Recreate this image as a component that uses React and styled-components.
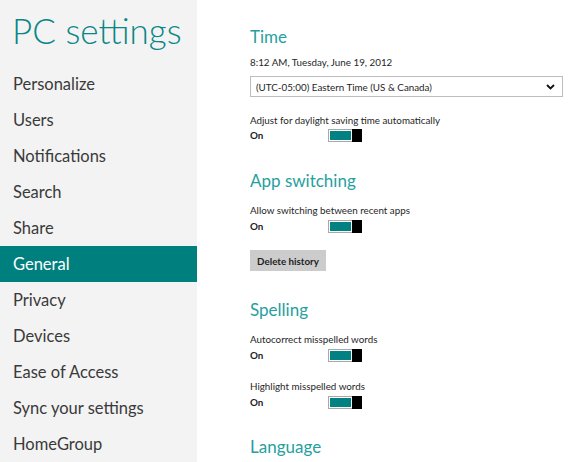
import React from "react";
import styled, { createGlobalStyle } from "styled-components";

const GlobalStyle = createGlobalStyle`
  html, body {
    margin: 0;
    padding: 0;
    background: #ffffff;
  }
  body {
    font-family: Lato, "Open Sans", sans-serif;
    color: #1e1e1e;
  }
`;

const Page = styled.div`
  display: flex;
  width: 580px;
  height: 462px;
  overflow: hidden;
`;

const Sidebar = styled.nav`
  width: 197px;
  flex-shrink: 0;
  background: #f3f3f3;
`;

const Title = styled.h1`
  margin: 0;
  height: 66px;
  padding: 10px 0 0 12px;
  box-sizing: border-box;
  font-size: 35px;
  line-height: 40px;
  font-weight: 300;
  color: #0a8686;
  white-space: nowrap;
`;

const NavList = styled.ul`
  list-style: none;
  margin: 0;
  padding: 0;
`;

const NavItem = styled.li`
  height: 36px;
  line-height: 36px;
  padding-left: 13px;
  font-size: 16.5px;
  font-weight: 400;
  color: ${(p) => (p.$active ? "#ffffff" : "#3a3a3a")};
  background: ${(p) => (p.$active ? "#007f7f" : "transparent")};
  white-space: nowrap;
`;

const Content = styled.main`
  flex: 1;
  padding: 25px 0 0 53px;
  box-sizing: border-box;
`;

const Heading = styled.h2`
  margin: ${(p) => p.$top || 0}px 0 0 0;
  height: 24px;
  line-height: 24px;
  font-size: 17px;
  font-weight: 400;
  color: #25a0a0;
`;

const Label = styled.div`
  margin-top: ${(p) => p.$top || 0}px;
  height: 16px;
  line-height: 16px;
  font-size: 9.8px;
  color: #262626;
  white-space: nowrap;
`;

const Select = styled.div`
  margin-top: 6px;
  width: 313px;
  height: 21px;
  box-sizing: border-box;
  border: 1px solid #bdbdbd;
  display: flex;
  align-items: center;
  justify-content: space-between;
  padding: 0 7px 0 5px;
  font-size: 9.8px;
  color: #1e1e1e;
`;

const ToggleRow = styled.div`
  margin-top: ${(p) => p.$top || 0}px;
  display: flex;
  align-items: center;
  height: 14px;
`;

const State = styled.span`
  width: 78px;
  font-size: 9.8px;
  font-weight: 700;
  color: #1e1e1e;
`;

const Track = styled.div`
  width: 34px;
  height: 13px;
  box-sizing: border-box;
  border: 1px solid #a8a8a8;
  background: #ffffff;
  display: flex;
  align-items: stretch;
`;

const Fill = styled.div`
  flex: 1;
  margin: 1px;
  background: #018181;
`;

const Thumb = styled.div`
  width: 10px;
  margin: -1px -1px -1px 0;
  background: #000000;
`;

const Button = styled.button`
  display: block;
  margin-top: 17px;
  width: 76px;
  height: 21px;
  border: none;
  padding: 0;
  background: #cccccc;
  font-family: inherit;
  font-size: 9.8px;
  font-weight: 700;
  color: #1e1e1e;
`;

const Toggle = ({ top }) => (
  <ToggleRow $top={top}>
    <State>On</State>
    <Track>
      <Fill />
      <Thumb />
    </Track>
  </ToggleRow>
);

const Chevron = () => (
  <svg width="9" height="6" viewBox="0 0 9 6">
    <path d="M1 1 L4.5 4.5 L8 1" fill="none" stroke="#111" strokeWidth="1.8" />
  </svg>
);

const navItems = [
  "Personalize",
  "Users",
  "Notifications",
  "Search",
  "Share",
  "General",
  "Privacy",
  "Devices",
  "Ease of Access",
  "Sync your settings",
  "HomeGroup",
];

export default function App() {
  return (
    <Page>
      <GlobalStyle />
      <Sidebar>
        <Title>PC settings</Title>
        <NavList>
          {navItems.map((item) => (
            <NavItem key={item} $active={item === "General"}>
              {item}
            </NavItem>
          ))}
        </NavList>
      </Sidebar>
      <Content>
        <Heading>Time</Heading>
        <Label $top={5}>8:12 AM, Tuesday, June 19, 2012</Label>
        <Select>
          <span>(UTC-05:00) Eastern Time (US &amp; Canada)</span>
          <Chevron />
        </Select>
        <Label $top={15}>Adjust for daylight saving time automatically</Label>
        <Toggle top={0} />

        <Heading $top={27}>App switching</Heading>
        <Label $top={9}>Allow switching between recent apps</Label>
        <Toggle top={1} />
        <Button>Delete history</Button>

        <Heading $top={27}>Spelling</Heading>
        <Label $top={9}>Autocorrect misspelled words</Label>
        <Toggle top={1} />
        <Label $top={16}>Highlight misspelled words</Label>
        <Toggle top={1} />

        <Heading $top={26}>Language</Heading>
      </Content>
    </Page>
  );
}
